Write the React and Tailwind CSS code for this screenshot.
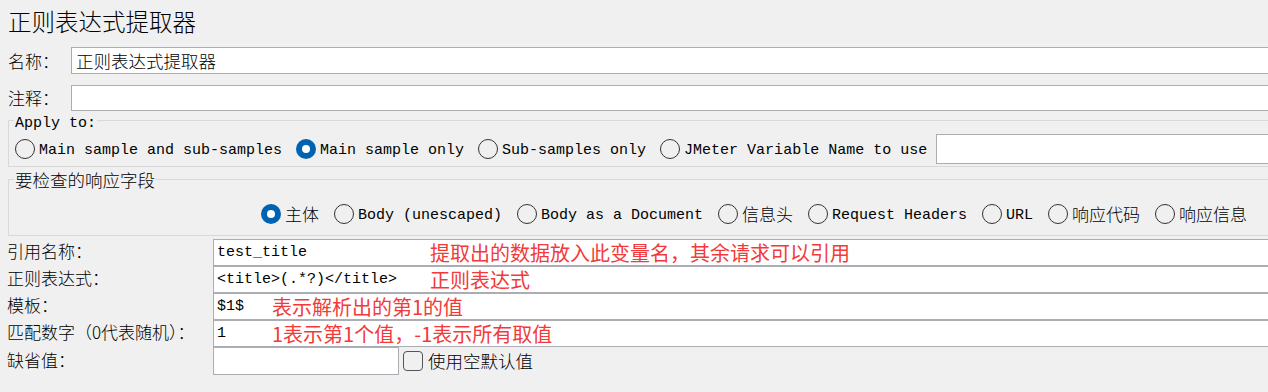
import React from "react";

const CJK = "font-['Noto_Sans_CJK_SC',sans-serif] font-light";
const RED = "font-['Noto_Sans_CJK_SC',sans-serif] font-normal";
const MONO = "font-['Liberation_Mono','Noto_Sans_CJK_SC',monospace]";

function Radio({ checked }) {
  if (checked) {
    return (
      <span className="w-5 h-5 rounded-full bg-[#0063b1] flex items-center justify-center shrink-0">
        <span className="w-2 h-2 rounded-full bg-white" />
      </span>
    );
  }
  return <span className="w-5 h-5 rounded-full border border-[#333333] shrink-0 box-border" />;
}

function RadioItem({ checked, label, mono }) {
  return (
    <div className="flex items-center shrink-0">
      <Radio checked={checked} />
      <span
        className={
          mono
            ? "ml-1 pt-[3px] text-[15px] leading-[20px] whitespace-nowrap font-['Liberation_Mono','Noto_Sans_CJK_SC',monospace]"
            : "ml-1 text-[17px] leading-[20px] whitespace-nowrap font-['Noto_Sans_CJK_SC',sans-serif] font-light"
        }
      >
        {label}
      </span>
    </div>
  );
}

function FieldRow({ label, value, note, noteLeft }) {
  return (
    <div className="flex h-[27px]">
      <div className={`w-[213px] pl-[7px] text-[17px] leading-[24px] whitespace-nowrap ${CJK}`}>{label}</div>
      <div className="relative flex-1 border border-r-0 border-[#abadb3] bg-white flex items-center pl-[3px]">
        <span className={`pt-[1px] text-[15px] leading-[20px] whitespace-pre ${MONO}`}>{value}</span>
        {note && (
          <span
            className={`absolute top-1/2 -translate-y-1/2 text-[20px] leading-[24px] text-[#f23a3a] whitespace-nowrap ${RED}`}
            style={{ left: noteLeft }}
          >
            {note}
          </span>
        )}
      </div>
    </div>
  );
}

export default function App() {
  return (
    <div className="w-[1268px] h-[392px] bg-[#f0f0f0] overflow-hidden text-black">
      {/* Title */}
      <div className={`h-[47px] pl-2 pt-[5px] text-[23.5px] leading-[32px] ${CJK}`}>正则表达式提取器</div>

      {/* Name */}
      <div className="flex h-[27px]">
        <div className={`w-[71px] pl-2 text-[17px] leading-[27px] ${CJK}`}>名称：</div>
        <div className="flex-1 border border-r-0 border-[#abadb3] bg-white flex items-center pl-1">
          <span className={`text-[17.5px] leading-[22px] ${CJK}`}>正则表达式提取器</span>
        </div>
      </div>

      {/* Comment */}
      <div className="flex h-[26px] mt-[11px]">
        <div className={`w-[71px] pl-2 text-[17px] leading-[26px] ${CJK}`}>注释：</div>
        <div className="flex-1 border border-r-0 border-[#abadb3] bg-white" />
      </div>

      {/* Apply to group */}
      <div className="relative mt-[9px] ml-2 h-[47px] border border-r-0 border-[#d9d9d9] pt-[13px]">
        <span className={`absolute -top-[6px] left-[5px] px-[1px] bg-[#f0f0f0] text-[15px] leading-[18px] ${MONO}`}>
          Apply to:
        </span>
        <div className="flex items-center h-[30px] pl-[6px] gap-[14px]">
          <RadioItem label="Main sample and sub-samples" mono />
          <RadioItem label="Main sample only" mono checked />
          <RadioItem label="Sub-samples only" mono />
          <div className="flex items-center flex-1 h-full">
            <RadioItem label="JMeter Variable Name to use" mono />
            <div className="ml-[9px] flex-1 h-full border border-r-0 border-[#abadb3] bg-white" />
          </div>
        </div>
      </div>

      {/* Response field group */}
      <div className="relative mt-[12px] ml-2 h-[57px] border border-r-0 border-[#d9d9d9] pt-[22px]">
        <span className={`absolute -top-[10px] left-[5px] px-[1px] bg-[#f0f0f0] text-[17.5px] leading-[20px] ${CJK}`}>
          要检查的响应字段
        </span>
        <div className="flex items-center h-[24px] pl-[252px] gap-[15px]">
          <RadioItem label="主体" checked />
          <RadioItem label="Body (unescaped)" mono />
          <RadioItem label="Body as a Document" mono />
          <RadioItem label="信息头" />
          <RadioItem label="Request Headers" mono />
          <RadioItem label="URL" mono />
          <RadioItem label="响应代码" />
          <RadioItem label="响应信息" />
        </div>
      </div>

      {/* Fields */}
      <div className="mt-[3px] flex flex-col">
        <FieldRow
          label="引用名称："
          value="test_title"
          note="提取出的数据放入此变量名，其余请求可以引用"
          noteLeft={216}
        />
        <FieldRow label="正则表达式：" value="<title>(.*?)</title>" note="正则表达式" noteLeft={216} />
        <FieldRow label="模板：" value="$1$" note="表示解析出的第1的值" noteLeft={58} />
        <FieldRow
          label="匹配数字（0代表随机）："
          value="1"
          note="1表示第1个值，-1表示所有取值"
          noteLeft={58}
        />
        <div className="flex h-[28px] items-center">
          <div className={`w-[213px] pl-[7px] text-[17px] leading-[25px] self-start ${CJK}`}>缺省值：</div>
          <div className="w-[186px] h-[28px] border border-[#abadb3] bg-white" />
          <span className="ml-1 w-5 h-5 rounded-[4px] border border-[#555555] bg-[#f0f0f0] box-border shrink-0" />
          <span className={`ml-[5px] text-[17.5px] leading-[22px] ${CJK}`}>使用空默认值</span>
        </div>
      </div>
    </div>
  );
}
